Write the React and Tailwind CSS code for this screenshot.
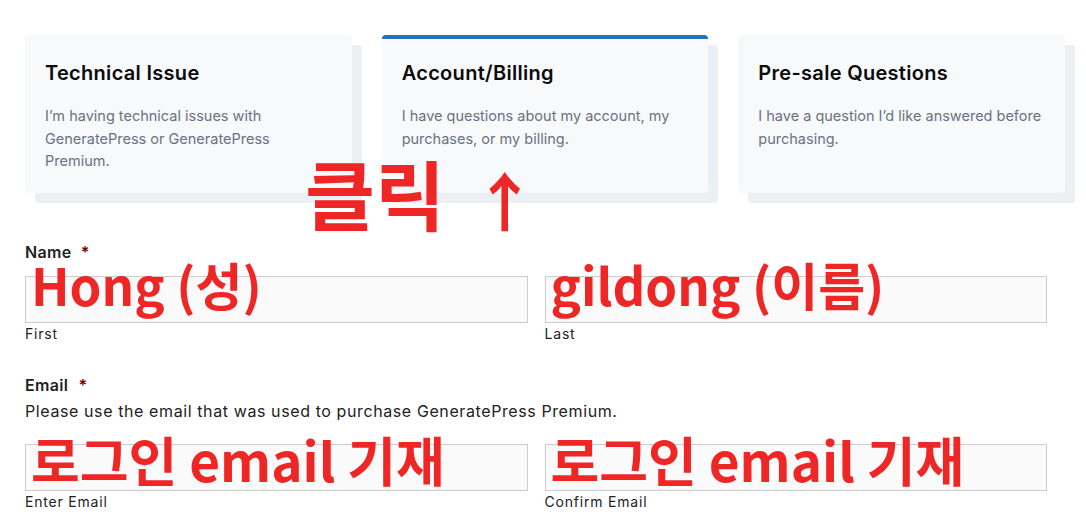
import React from 'react';

const cards = [
  {
    title: 'Technical Issue',
    text: 'I’m having technical issues with GeneratePress or GeneratePress Premium.',
  },
  {
    title: 'Account/Billing',
    text: 'I have questions about my account, my purchases, or my billing.',
    active: true,
  },
  {
    title: 'Pre-sale Questions',
    text: 'I have a question I’d like answered before purchasing.',
  },
];

const redFont = { fontFamily: '"Noto Sans CJK KR", "Noto Sans", sans-serif' };

const Card = ({ card }) => (
  <div
    className={`rounded-[4px] bg-[#f7f9fb] shadow-[10px_10px_0_0_#edf0f3] px-5 pb-5 ${
      card.active ? 'border-t-4 border-[#1e73be] pt-5' : 'pt-6'
    }`}
  >
    <h3 className="text-[20px] leading-7 font-semibold text-[#0b0b0b] tracking-[0.3px]">{card.title}</h3>
    <p className="mt-[18px] text-[14.5px] leading-[22.5px] text-[#6b7280]">{card.text}</p>
  </div>
);

const Field = ({ value, label, size }) => (
  <div className="flex flex-col">
    <div className="relative h-[47px] border border-[#cccccc] bg-[#fafafa]">
      <span
        className={`absolute left-[5px] whitespace-nowrap font-bold text-[#ee2626] leading-none ${size}`}
        style={redFont}
      >
        {value}
      </span>
    </div>
    <span className="mt-[1px] text-[14px] leading-5 text-[#222] tracking-[0.8px]">{label}</span>
  </div>
);

export default function App() {
  return (
    <div
      className="relative bg-white w-[1086px] h-[524px] overflow-hidden pl-[25px] pt-[35px]"
      style={{ fontFamily: 'Inter, "Noto Sans", sans-serif' }}
    >
      <div className="grid grid-cols-3 gap-[30px] w-[1040px]">
        {cards.map((c) => (
          <Card key={c.title} card={c} />
        ))}
      </div>

      {/* annotation */}
      <div
        className="absolute left-[305px] top-[154px] flex items-start font-bold text-[#ee2626] leading-none"
        style={redFont}
      >
        <span className="text-[76px]">클릭</span>
        <span className="ml-[28px] mt-[12px] text-[64px] font-semibold">↑</span>
      </div>

      <div className="mt-[47px] w-[1022px]">
        <div className="text-[16px] leading-6 font-semibold text-[#222] tracking-[0.3px]">
          Name <span className="ml-[5px] text-[#790000]">*</span>
        </div>
        <div className="mt-3 grid grid-cols-2 gap-[17px]">
          <Field value="Hong (성)" label="First" size="text-[51px] -top-[18px]" />
          <Field value="gildong (이름)" label="Last" size="text-[51px] -top-[18px]" />
        </div>

        <div className="mt-[29px] text-[16px] leading-6 font-semibold text-[#222] tracking-[0.3px]">
          Email <span className="ml-[6px] text-[#790000]">*</span>
        </div>
        <p className="mt-[3px] text-[16px] leading-[22px] text-[#222] tracking-[0.6px]">
          Please use the email that was used to purchase GeneratePress Premium.
        </p>
        <div className="mt-[22px] grid grid-cols-2 gap-[17px]">
          <Field value="로그인 email 기재" label="Enter Email" size="text-[53px] -top-[12px]" />
          <Field value="로그인 email 기재" label="Confirm Email" size="text-[53px] -top-[12px]" />
        </div>
      </div>
    </div>
  );
}
